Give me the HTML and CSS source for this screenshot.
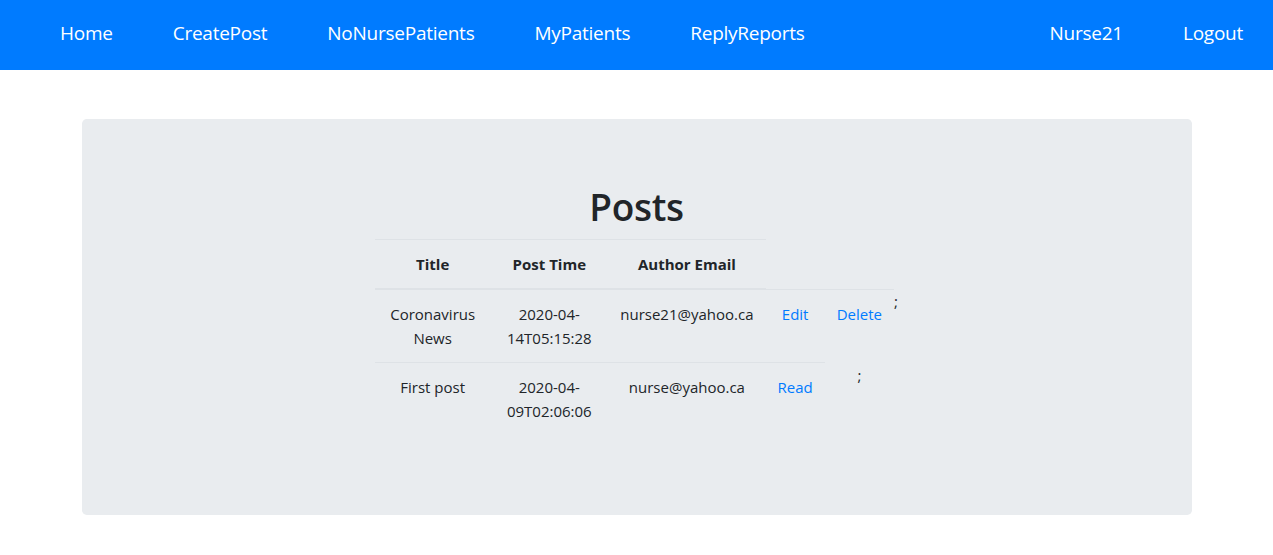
FILE: index.html
```html
<!DOCTYPE html>
<html lang="en">
<head>
<meta charset="utf-8">
<title>Posts</title>
<link rel="stylesheet" href="styles.css">
</head>
<body>
<nav class="topnav">
  <div class="nav-group nav-left">
    <a class="nav-link" href="#">Home</a>
    <a class="nav-link" href="#">CreatePost</a>
    <a class="nav-link" href="#">NoNursePatients</a>
    <a class="nav-link" href="#">MyPatients</a>
    <a class="nav-link" href="#">ReplyReports</a>
  </div>
  <div class="nav-group">
    <a class="nav-link" href="#">Nurse21</a>
    <a class="nav-link" href="#">Logout</a>
  </div>
</nav>
<div class="container">
  <div class="jumbotron">
    <h1 class="title">Posts</h1>
    <table class="table">
      <thead>
        <tr>
          <th>Title</th>
          <th>Post Time</th>
          <th>Author Email</th>
        </tr>
      </thead>
      <tbody>
        <tr>
          <td>Coronavirus News</td>
          <td>2020-04-14T05:15:28</td>
          <td>nurse21@yahoo.ca</td>
          <td><a href="#">Edit</a></td>
          <td><a href="#">Delete</a></td>
          <td class="stray">;</td>
        </tr>
        <tr>
          <td>First post</td>
          <td>2020-04-09T02:06:06</td>
          <td>nurse@yahoo.ca</td>
          <td><a href="#">Read</a></td>
          <td class="stray">;</td>
        </tr>
      </tbody>
    </table>
  </div>
</div>
</body>
</html>
```
FILE: styles.css
```css
* { box-sizing: border-box; }
html, body {
  margin: 0;
  padding: 0;
}
body {
  font-family: "Open Sans", "Noto Sans", sans-serif;
  font-size: 16px;
  line-height: 1.5;
  color: #212529;
  background: #fff;
}
a { color: #007bff; text-decoration: none; }

.topnav {
  height: 70px;
  background: #007bff;
  display: flex;
  justify-content: space-between;
  align-items: center;
}
.nav-group { display: flex; }
.nav-left { padding-left: 30px; }
.nav-link {
  color: #fff;
  font-size: 19px;
  letter-spacing: -0.25px;
  padding: 0 30px 4px;
  line-height: 1;
}

.container {
  max-width: 1140px;
  margin: 0 auto;
  padding: 0 15px;
}
.jumbotron {
  margin-top: 49px;
  background: #e9ecef;
  border-radius: 4.8px;
  padding: 64px 32px;
  text-align: center;
}
.title {
  margin: 0 0 8px;
  font-size: 37px;
  font-weight: 600;
  letter-spacing: -0.3px;
  line-height: 48px;
}
.table {
  width: 50%;
  margin: 0 auto 16px;
  border-collapse: collapse;
  font-size: 15px;
  line-height: 24px;
}
.table th, .table td {
  padding: 12px;
  border-top: 1px solid #dee2e6;
  vertical-align: top;
  text-align: center;
}
.table thead th {
  vertical-align: bottom;
  border-bottom: 2px solid #dee2e6;
  font-weight: 700;
}
.table td.stray {
  padding: 0;
  border: none;
  vertical-align: top;
}
```
